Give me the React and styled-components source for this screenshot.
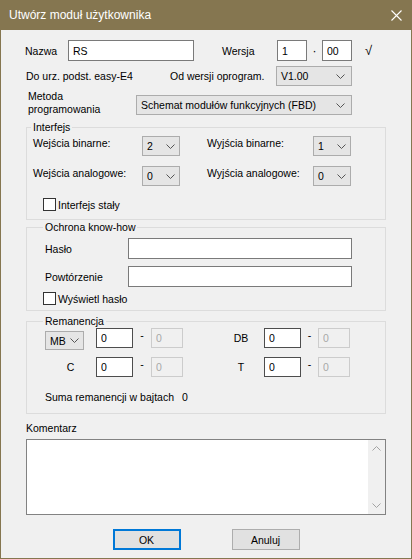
import React from "react";
import styled, { createGlobalStyle } from "styled-components";

const Global = createGlobalStyle`
  html, body { margin: 0; padding: 0; background: #f0f0f0; overflow: hidden; }
  body { font-family: "Liberation Sans", Arial, sans-serif; font-size: 10.5px; color: #000; }
  * { box-sizing: border-box; }
`;

const OLIVE = "#857650";

const Window = styled.div`
  width: 412px;
  height: 559px;
  border: 1px solid ${OLIVE};
  border-top: none;
  background: #f0f0f0;
  display: flex;
  flex-direction: column;
`;

const TitleBar = styled.div`
  height: 30px;
  flex: none;
  background: ${OLIVE};
  color: #fff;
  display: flex;
  align-items: center;
  justify-content: space-between;
  padding: 0 9px 0 8px;
  font-size: 12px;
`;

const CloseIcon = () => (
  <svg width="11" height="11" viewBox="0 0 11 11">
    <path d="M0.5 0.5 L10.5 10.5 M10.5 0.5 L0.5 10.5" stroke="#fff" strokeWidth="1.1" fill="none" />
  </svg>
);

const Body = styled.div`
  display: flex;
  flex-direction: column;
  flex: 1;
`;

const Row = styled.div`
  display: flex;
  align-items: ${(p) => p.$align || "center"};
  height: ${(p) => (p.$h ? `${p.$h}px` : "auto")};
  margin-top: ${(p) => p.$mt || 0}px;
  padding-left: ${(p) => p.$pl || 0}px;
  margin-left: ${(p) => p.$ml || 0}px;
`;

const Label = styled.span`
  flex: none;
  width: ${(p) => (p.$w ? `${p.$w}px` : "auto")};
  margin-left: ${(p) => p.$ml || 0}px;
  line-height: ${(p) => p.$lh || 14}px;
  white-space: ${(p) => (p.$wrap ? "normal" : "nowrap")};
  text-align: ${(p) => (p.$center ? "center" : "left")};
`;

const TextInput = styled.input`
  flex: none;
  width: ${(p) => p.$w}px;
  height: ${(p) => p.$h || 21}px;
  border: 1px solid ${(p) => (p.$dark ? "#4d4d4d" : "#7a7a7a")};
  background: #fff;
  font: inherit;
  color: #000;
  padding: 0 0 0 4px;
  margin: 0;
  outline: none;
`;

const DisabledInput = styled.input`
  flex: none;
  width: ${(p) => p.$w}px;
  height: 20px;
  border: 1px solid #cccccc;
  background: #f0f0f0;
  font: inherit;
  color: #a8a8a8;
  padding: 0 0 0 4px;
  margin: 0;
  outline: none;
`;

const Sep = styled.span`
  flex: none;
  width: ${(p) => p.$w}px;
  text-align: center;
  line-height: 14px;
  font-size: ${(p) => p.$fs || 10.5}px;
  align-self: ${(p) => (p.$top ? "flex-start" : "auto")};
`;

const CheckMark = styled.span`
  margin-left: 13px;
  font-size: 13px;
`;

const SelectBox = styled.div`
  flex: none;
  width: ${(p) => p.$w}px;
  height: ${(p) => p.$h || 20}px;
  margin-top: ${(p) => p.$mt || 0}px;
  background: #e5e5e5;
  border: 1px solid #acacac;
  display: flex;
  align-items: center;
  justify-content: space-between;
  padding: 0 ${(p) => p.$pr || 6}px 0 4px;
`;

const Chevron = () => (
  <svg width="9" height="5" viewBox="0 0 9 5">
    <path d="M0.5 0.5 L4.5 4.5 L8.5 0.5" stroke="#555" strokeWidth="1" fill="none" />
  </svg>
);

const Select = ({ value, ...rest }) => (
  <SelectBox {...rest}>
    <span>{value}</span>
    <Chevron />
  </SelectBox>
);

const Group = styled.fieldset`
  margin: ${(p) => p.$mt || 0}px 0 0 25px;
  width: 360px;
  border: 1px solid #dcdcdc;
  padding: ${(p) => p.$pad};
  min-width: 0;
`;

const Legend = styled.legend`
  padding: 0 2px;
  margin-left: -2px;
  line-height: 14px;
  font-size: 10.5px;
`;

const CheckBox = styled.span`
  flex: none;
  width: 13px;
  height: 13px;
  border: 1px solid #333;
  background: #fff;
  margin-right: 2px;
`;

const Cell = styled.div`
  flex: none;
  width: ${(p) => p.$w}px;
  height: 20px;
  display: flex;
  align-items: flex-start;
  justify-content: ${(p) => (p.$center ? "center" : "flex-start")};
  line-height: 20px;
  margin-left: ${(p) => p.$ml || 0}px;
`;

const CommentBox = styled.div`
  margin: 4px 0 0 25px;
  width: 360px;
  height: 76px;
  border: 1px solid #828282;
  background: #fff;
  display: flex;
`;

const CommentArea = styled.textarea`
  flex: 1;
  border: none;
  resize: none;
  outline: none;
  font: inherit;
  padding: 2px 4px;
  background: #fff;
`;

const ScrollBar = styled.div`
  width: 17px;
  flex: none;
  background: #f0f0f0;
  display: flex;
  flex-direction: column;
  justify-content: space-between;
  align-items: center;
  padding: 6px 0 6px;
`;

const Arrow = ({ up }) => (
  <svg width="9" height="5" viewBox="0 0 9 5">
    <path d={up ? "M0.5 4.5 L4.5 0.5 L8.5 4.5" : "M0.5 0.5 L4.5 4.5 L8.5 0.5"} stroke="#a3a3a3" strokeWidth="1" fill="none" />
  </svg>
);

const Buttons = styled.div`
  display: flex;
  justify-content: center;
  gap: 51px;
  margin-top: 14px;
`;

const Button = styled.button`
  width: 68px;
  height: 21px;
  background: #e1e1e1;
  border: 1px solid ${(p) => (p.$default ? "#0078d7" : "#adadad")};
  box-shadow: ${(p) => (p.$default ? "inset 0 0 0 1px #0078d7" : "none")};
  font: inherit;
  color: #000;
  padding: 0;
  margin: 0;
`;

export default function App() {
  return (
    <>
      <Global />
      <Window>
        <TitleBar>
          <span>Utwórz moduł użytkownika</span>
          <CloseIcon />
        </TitleBar>
        <Body>
          <Row $mt={10} $h={21} $pl={24}>
            <Label $w={43}>Nazwa</Label>
            <TextInput $w={126} defaultValue="RS" />
            <Label $w={55} $ml={28}>Wersja</Label>
            <TextInput $w={30} defaultValue="1" />
            <Sep $w={15} $fs={12}>·</Sep>
            <TextInput $w={30} defaultValue="00" />
            <CheckMark>√</CheckMark>
          </Row>
          <Row $mt={5} $h={20} $pl={25}>
            <Label $w={144}>Do urz. podst. easy-E4</Label>
            <Label $w={106}>Od wersji oprogram.</Label>
            <Select $w={76} value="V1.00" $pr={6} />
          </Row>
          <Row $mt={4} $h={26} $pl={27} $align="flex-start">
            <Label $w={108} $lh={13} $wrap>
              Metoda
              <br />
              programowania
            </Label>
            <Select $w={216} $mt={5} value="Schemat modułów funkcyjnych (FBD)" $pr={6} />
          </Row>

          <Group $mt={4} $pad="2px 0 8px 6px">
            <Legend>Interfejs</Legend>
            <Row $h={20} $align="flex-start">
              <Label $w={109}>Wejścia binarne:</Label>
              <Select $w={38} value="2" $pr={4} />
              <Label $w={106} $ml={27}>Wyjścia binarne:</Label>
              <Select $w={38} value="1" $pr={4} />
            </Row>
            <Row $mt={10} $h={20} $align="flex-start">
              <Label $w={109}>Wejścia analogowe:</Label>
              <Select $w={38} value="0" $pr={4} />
              <Label $w={106} $ml={27}>Wyjścia analogowe:</Label>
              <Select $w={38} value="0" $pr={4} />
            </Row>
            <Row $mt={12} $h={13} $pl={10}>
              <CheckBox />
              <Label>Interfejs stały</Label>
            </Row>
          </Group>

          <Group $pad="4px 0 5px 18px">
            <Legend>Ochrona know-how</Legend>
            <Row $h={21}>
              <Label $w={83}>Hasło</Label>
              <TextInput $w={224} />
            </Row>
            <Row $mt={7} $h={21}>
              <Label $w={83}>Powtórzenie</Label>
              <TextInput $w={224} />
            </Row>
            <Row $mt={5} $h={13} $ml={-2}>
              <CheckBox />
              <Label>Wyświetl hasło</Label>
            </Row>
          </Group>

          <Group $mt={3} $pad="0 0 9px 18px">
            <Legend>Remanencja</Legend>
            <Row $align="flex-start">
              <Cell $w={51}>
                <Select $w={39} $h={19} $mt={3} value="MB" $pr={4} />
              </Cell>
              <TextInput $w={37} $h={20} $dark defaultValue="0" />
              <Sep $w={18} $top>-</Sep>
              <DisabledInput $w={32} defaultValue="0" />
              <Cell $w={46} $ml={35} $center>DB</Cell>
              <TextInput $w={37} $h={20} $dark defaultValue="0" />
              <Sep $w={17} $top>-</Sep>
              <DisabledInput $w={32} defaultValue="0" />
            </Row>
            <Row $mt={9} $align="flex-start">
              <Cell $w={51} $center>C</Cell>
              <TextInput $w={37} $h={20} $dark defaultValue="0" />
              <Sep $w={18} $top>-</Sep>
              <DisabledInput $w={32} defaultValue="0" />
              <Cell $w={46} $ml={35} $center>T</Cell>
              <TextInput $w={37} $h={20} $dark defaultValue="0" />
              <Sep $w={17} $top>-</Sep>
              <DisabledInput $w={32} defaultValue="0" />
            </Row>
            <Row $mt={13}>
              <Label>Suma remanencji w bajtach</Label>
              <Label $ml={8}>0</Label>
            </Row>
          </Group>

          <Row $mt={7} $pl={25}>
            <Label>Komentarz</Label>
          </Row>
          <CommentBox>
            <CommentArea />
            <ScrollBar>
              <Arrow up />
              <Arrow />
            </ScrollBar>
          </CommentBox>
          <Buttons>
            <Button $default>OK</Button>
            <Button>Anuluj</Button>
          </Buttons>
        </Body>
      </Window>
    </>
  );
}
